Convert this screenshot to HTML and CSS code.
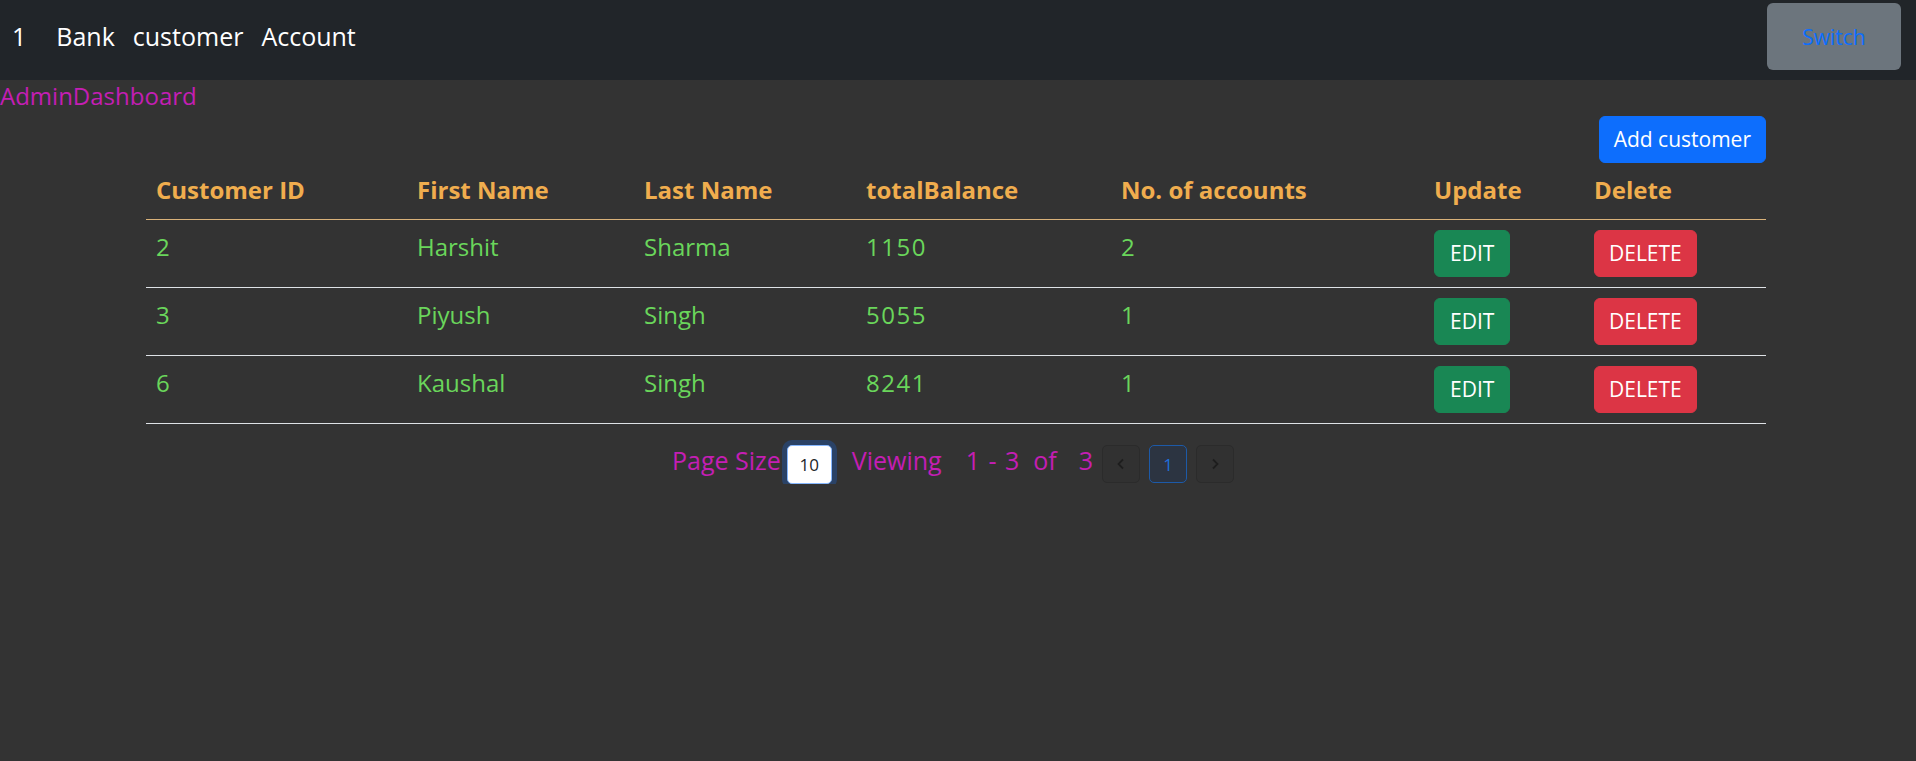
FILE: index.html
```html
<!DOCTYPE html>
<html lang="en">
<head>
<meta charset="utf-8">
<title>Bank customer Account</title>
<link rel="stylesheet" href="styles.css">
</head>
<body>
<nav class="navbar">
  <div class="nav-left">
    <span class="brand">1</span>
    <a class="nav-link">Bank</a>
    <a class="nav-link">customer</a>
    <a class="nav-link">Account</a>
  </div>
  <button class="btn-switch">Switch</button>
</nav>
<div class="page-title">AdminDashboard</div>
<main class="content">
  <div class="toolbar"><button class="btn btn-primary">Add customer</button></div>
  <table class="table">
    <colgroup>
      <col class="c1"><col class="c2"><col class="c3"><col class="c4"><col class="c5"><col class="c6"><col class="c7">
    </colgroup>
    <thead>
      <tr>
        <th>Customer ID</th>
        <th>First Name</th>
        <th>Last Name</th>
        <th>totalBalance</th>
        <th>No. of accounts</th>
        <th>Update</th>
        <th>Delete</th>
      </tr>
    </thead>
    <tbody>
      <tr>
        <td class="num">2</td><td>Harshit</td><td>Sharma</td><td class="num">1150</td><td class="num">2</td>
        <td class="act"><button class="btn btn-success">EDIT</button></td>
        <td class="act"><button class="btn btn-danger">DELETE</button></td>
      </tr>
      <tr>
        <td class="num">3</td><td>Piyush</td><td>Singh</td><td class="num">5055</td><td class="num">1</td>
        <td class="act"><button class="btn btn-success">EDIT</button></td>
        <td class="act"><button class="btn btn-danger">DELETE</button></td>
      </tr>
      <tr>
        <td class="num">6</td><td>Kaushal</td><td>Singh</td><td class="num">8241</td><td class="num">1</td>
        <td class="act"><button class="btn btn-success">EDIT</button></td>
        <td class="act"><button class="btn btn-danger">DELETE</button></td>
      </tr>
    </tbody>
  </table>
  <div class="pager">
    <span class="ptext">Page Size</span>
    <input class="size-input" type="text" value="10" readonly>
    <span class="ptext viewing">Viewing</span>
    <span class="ptext range">1 - 3</span>
    <span class="ptext of">of</span>
    <span class="ptext total">3</span>
    <div class="pages">
      <span class="page-box nav-box"><svg width="10" height="12" viewBox="0 0 10 12"><path d="M7 1.5 L2.5 6 L7 10.5" fill="none" stroke="#1e1e1e" stroke-width="1.8"/></svg></span>
      <span class="page-box active">1</span>
      <span class="page-box nav-box"><svg width="10" height="12" viewBox="0 0 10 12"><path d="M3 1.5 L7.5 6 L3 10.5" fill="none" stroke="#1e1e1e" stroke-width="1.8"/></svg></span>
    </div>
  </div>
</main>
</body>
</html>
```
FILE: styles.css
```css
html, body {
  margin: 0;
  padding: 0;
}
body {
  background: #333333;
  font-family: "Open Sans", "Noto Sans", sans-serif;
  color: #ffffff;
}

.navbar {
  height: 80px;
  box-sizing: border-box;
  background: #212529;
  padding: 3px 15px 10px 12px;
  display: flex;
  align-items: center;
  justify-content: space-between;
}
.nav-left {
  display: flex;
  align-items: center;
  gap: 18px;
  font-size: 25px;
  line-height: 32px;
  padding-bottom: 1px;
}
.brand {
  margin-right: 12px;
  color: #ffffff;
}
.nav-link {
  color: #ffffff;
  text-decoration: none;
}
.btn-switch {
  width: 134px;
  height: 67px;
  background: #6c757d;
  border: none;
  border-radius: 6px;
  color: #0d6efd;
  font-family: "Open Sans", sans-serif;
  font-size: 21px;
  padding: 0;
}

.page-title {
  color: #c41eb4;
  font-size: 24px;
  line-height: 31px;
}

.content {
  width: 1620px;
  margin-left: calc(50% - 812px);
}
.toolbar {
  display: flex;
  justify-content: flex-end;
  margin-top: 5px;
}

.btn {
  font-family: "Open Sans", sans-serif;
  font-size: 21px;
  line-height: 45px;
  height: 47px;
  padding: 0 14px;
  border: 1px solid transparent;
  border-radius: 6px;
  color: #ffffff;
  cursor: pointer;
}
.btn-primary { background: #0d6efd; border-color: #0d6efd; }
.btn-success { background: #198754; border-color: #198754; padding: 0 15px; }
.btn-danger { background: #dc3545; border-color: #dc3545; padding: 0 14px; }

.table {
  width: 1620px;
  table-layout: fixed;
  border-collapse: separate;
  border-spacing: 0;
}
.c1 { width: 261px; }
.c2 { width: 227px; }
.c3 { width: 222px; }
.c4 { width: 255px; }
.c5 { width: 313px; }
.c6 { width: 160px; }
.c7 { width: 182px; }

.table th {
  text-align: left;
  color: #f0ad4e;
  font-weight: 700;
  font-size: 24px;
  line-height: 34px;
  padding: 10px 10px 12px;
  border-bottom: 1px solid #d9b27a;
  white-space: nowrap;
}
.table td {
  color: #6ad65b;
  font-size: 24px;
  line-height: 30px;
  padding: 12px 10px 0;
  vertical-align: top;
  border-bottom: 1px solid #dee2e6;
}
.table td.num {
  letter-spacing: 1.5px;
}
.table td.act {
  padding: 10px;
}

.pager {
  display: flex;
  justify-content: center;
  align-items: flex-start;
  margin-top: 21px;
  padding-right: 6px;
  color: #c41eb4;
}
.ptext {
  font-size: 25px;
  line-height: 30px;
  white-space: nowrap;
}
.size-input {
  box-sizing: border-box;
  width: 45px;
  height: 39px;
  margin: 0 0 0 6px;
  padding: 0;
  border: 1px solid #86b7fe;
  border-radius: 5px;
  background: #ffffff;
  color: #212529;
  font-family: "Open Sans", sans-serif;
  font-size: 17px;
  text-align: center;
  box-shadow: 0 0 0 5px #2a4266;
  outline: none;
}
.viewing { margin-left: 20px; }
.range { margin-left: 24px; word-spacing: 2px; }
.of { margin-left: 14px; }
.total { margin-left: 22px; }
.pages {
  display: flex;
  gap: 9px;
  margin-left: 9px;
}
.page-box {
  box-sizing: border-box;
  width: 38px;
  height: 38px;
  border-radius: 5px;
  display: flex;
  align-items: center;
  justify-content: center;
  font-size: 17px;
}
.nav-box {
  background: #313131;
  border: 1px solid #2b2b2b;
}
.active {
  background: #2c3441;
  border: 1px solid #1d5aa8;
  color: #1f6fdc;
}
```
